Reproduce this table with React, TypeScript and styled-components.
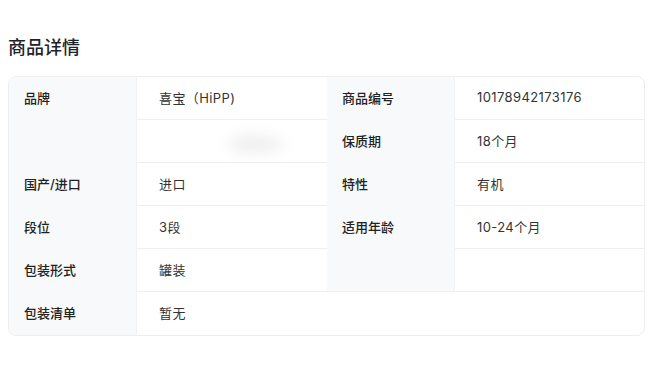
import styled, { createGlobalStyle } from "styled-components";

const GlobalStyle = createGlobalStyle`
  * {
    box-sizing: border-box;
  }
  body {
    margin: 0;
    background: #ffffff;
    font-family: "Inter", "Noto Sans CJK SC", sans-serif;
    color: #333333;
  }
`;

const Page = styled.div`
  padding: 33px 8px 8px 8px;
`;

const Title = styled.h2`
  margin: 0 0 17px 0;
  font-family: "Noto Sans CJK SC", sans-serif;
  font-size: 18px;
  line-height: 26px;
  font-weight: 500;
  color: #1f2329;
`;

const Card = styled.div`
  display: grid;
  grid-template-columns: 128px 190px 128px 1fr;
  border: 1px solid #ededed;
  border-radius: 8px;
  overflow: hidden;
`;

const LabelCell = styled.div<{ $bordered?: boolean }>`
  display: flex;
  align-items: center;
  height: 43px;
  padding: 0 15px 2px 15px;
  background: #f8f9fb;
  border-right: 1px solid #f0f1f3;
  border-bottom: 1px solid ${({ $bordered }) => ($bordered ? "#eeeeee" : "transparent")};
  font-size: 13px;
  font-weight: 500;
  color: #222222;
`;

const ValueCell = styled.div<{ $span?: number; $last?: boolean }>`
  grid-column: span ${({ $span }) => $span ?? 1};
  display: flex;
  align-items: center;
  height: 43px;
  padding: 0 22px 2px 22px;
  border-bottom: 1px solid ${({ $last }) => ($last ? "transparent" : "#eeeeee")};
  font-size: 13px;
  letter-spacing: 0.4px;
  color: #333333;
`;

const BlurMark = styled.div`
  width: 56px;
  height: 16px;
  margin: 8px 0 0 68px;
  border-radius: 50%;
  background: #d8d8d8;
  filter: blur(7px);
  opacity: 0.45;
`;

export default function App() {
  return (
    <>
      <GlobalStyle />
      <Page>
        <Title>商品详情</Title>
        <Card>
          <LabelCell>品牌</LabelCell>
          <ValueCell>喜宝（HiPP)</ValueCell>
          <LabelCell>商品编号</LabelCell>
          <ValueCell>10178942173176</ValueCell>

          <LabelCell />
          <ValueCell>
            <BlurMark />
          </ValueCell>
          <LabelCell>保质期</LabelCell>
          <ValueCell>18个月</ValueCell>

          <LabelCell>国产/进口</LabelCell>
          <ValueCell>进口</ValueCell>
          <LabelCell>特性</LabelCell>
          <ValueCell>有机</ValueCell>

          <LabelCell>段位</LabelCell>
          <ValueCell>3段</ValueCell>
          <LabelCell>适用年龄</LabelCell>
          <ValueCell>10-24个月</ValueCell>

          <LabelCell>包装形式</LabelCell>
          <ValueCell>罐装</ValueCell>
          <LabelCell $bordered />
          <ValueCell />

          <LabelCell>包装清单</LabelCell>
          <ValueCell $span={3} $last>
            暂无
          </ValueCell>
        </Card>
      </Page>
    </>
  );
}
